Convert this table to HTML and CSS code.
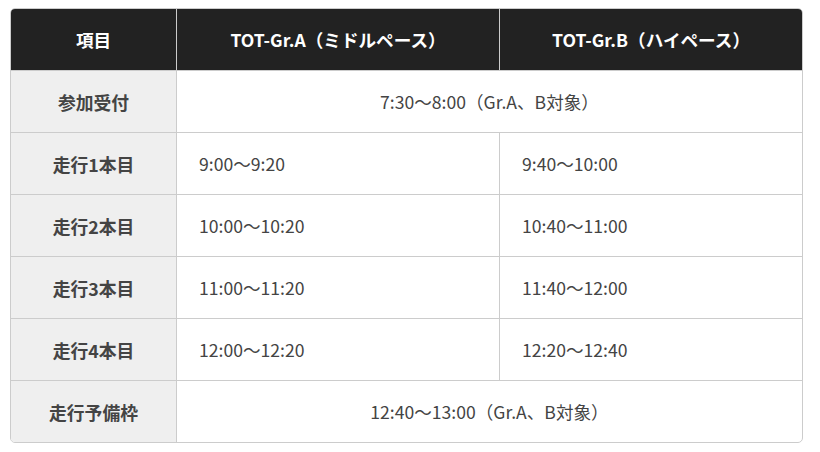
FILE: index.html
```html
<!DOCTYPE html>
<html lang="ja">
<head>
<meta charset="utf-8">
<link rel="stylesheet" href="styles.css">
</head>
<body>
<div class="wrap">
<table class="schedule">
  <thead>
    <tr>
      <th class="c1">項目</th>
      <th class="c2">TOT-Gr.A（ミドルペース）</th>
      <th class="c3">TOT-Gr.B（ハイペース）</th>
    </tr>
  </thead>
  <tbody>
    <tr><th>参加受付</th><td class="center" colspan="2">7:30～8:00（Gr.A、B対象）</td></tr>
    <tr><th>走行1本目</th><td>9:00～9:20</td><td>9:40～10:00</td></tr>
    <tr><th>走行2本目</th><td>10:00～10:20</td><td>10:40～11:00</td></tr>
    <tr><th>走行3本目</th><td>11:00～11:20</td><td>11:40～12:00</td></tr>
    <tr><th>走行4本目</th><td>12:00～12:20</td><td>12:20～12:40</td></tr>
    <tr><th>走行予備枠</th><td class="center" colspan="2">12:40～13:00（Gr.A、B対象）</td></tr>
  </tbody>
</table>
</div>
</body>
</html>
```
FILE: styles.css
```css
html, body {
  margin: 0;
  padding: 0;
  background: #fff;
}
body {
  font-family: "Noto Sans CJK JP", "Noto Sans", sans-serif;
  color: #444;
}
.wrap {
  padding: 8px 18px 0 10px;
}
.schedule {
  width: 793px;
  border-collapse: separate;
  border-spacing: 0;
  border: 1px solid #ccc;
  border-radius: 5px;
  overflow: hidden;
  table-layout: fixed;
}
.schedule th, .schedule td {
  height: 62px;
  padding: 0;
  box-sizing: border-box;
  border-left: 1px solid #ccc;
  border-top: 1px solid #ccc;
  vertical-align: middle;
}
.schedule tr > :first-child {
  border-left: none;
}
.schedule thead th {
  border-top: none;
  background: #222;
  color: #fff;
  font-size: 17.6px;
  font-weight: 700;
  text-align: center;
  height: 61px;
}
.schedule .c1 { width: 165px; }
.schedule .c2 { width: 323px; }
.schedule tbody th {
  background: #efefef;
  font-size: 17.8px;
  font-weight: 700;
  text-align: center;
  color: #444;
}
.schedule tbody td {
  font-size: 17.6px;
  font-weight: 400;
  padding-left: 22px;
  color: #444;
}
.schedule tbody td.center {
  text-align: center;
  padding-left: 0;
}
```
